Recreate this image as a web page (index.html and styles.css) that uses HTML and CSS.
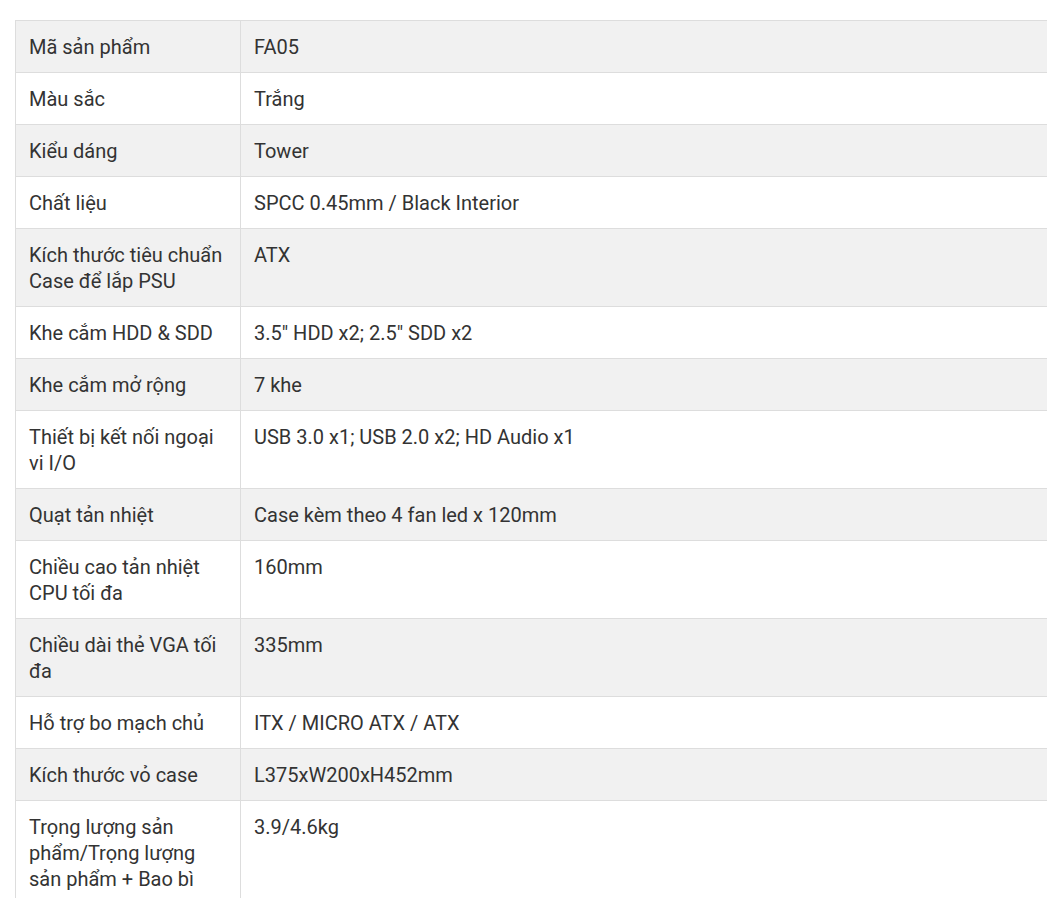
FILE: index.html
```html
<!DOCTYPE html>
<html lang="vi">
<head>
<meta charset="utf-8">
<link rel="stylesheet" href="styles.css">
</head>
<body>
<table class="spec">
<tbody>
<tr><td class="k">Mã sản phẩm</td><td>FA05</td></tr>
<tr><td class="k">Màu sắc</td><td>Trắng</td></tr>
<tr><td class="k">Kiểu dáng</td><td>Tower</td></tr>
<tr><td class="k">Chất liệu</td><td>SPCC 0.45mm / Black Interior</td></tr>
<tr><td class="k">Kích thước tiêu chuẩn Case để lắp PSU</td><td>ATX</td></tr>
<tr><td class="k">Khe cắm HDD &amp; SDD</td><td>3.5" HDD x2; 2.5" SDD x2</td></tr>
<tr><td class="k">Khe cắm mở rộng</td><td>7 khe</td></tr>
<tr><td class="k">Thiết bị kết nối ngoại vi I/O</td><td>USB 3.0 x1; USB 2.0 x2; HD Audio x1</td></tr>
<tr><td class="k">Quạt tản nhiệt</td><td>Case kèm theo 4 fan led x 120mm</td></tr>
<tr><td class="k">Chiều cao tản nhiệt CPU tối đa</td><td>160mm</td></tr>
<tr><td class="k">Chiều dài thẻ VGA tối đa</td><td>335mm</td></tr>
<tr><td class="k">Hỗ trợ bo mạch chủ</td><td>ITX / MICRO ATX / ATX</td></tr>
<tr><td class="k">Kích thước vỏ case</td><td>L375xW200xH452mm</td></tr>
<tr><td class="k">Trọng lượng sản phẩm/Trọng lượng sản phẩm + Bao bì</td><td>3.9/4.6kg</td></tr>
</tbody>
</table>
</body>
</html>
```

FILE: styles.css
```css
html, body {
  margin: 0;
  padding: 0;
  overflow: hidden;
  background: #fff;
}
body {
  padding: 20px 0 0 15px;
  font-family: Roboto, "Liberation Sans", sans-serif;
  font-size: 20px;
  color: #333;
}
.spec {
  border-collapse: collapse;
  width: 1100px;
  table-layout: fixed;
}
.spec td {
  border: 1px solid #dddddd;
  padding: 13px 13px 12px 13px;
  line-height: 26px;
  vertical-align: top;
  text-align: left;
}
.spec td.k {
  width: 198px;
}
.spec tr:nth-child(odd) td {
  background: #f1f1f1;
}
.spec tr:nth-child(even) td {
  background: #fff;
}
```
